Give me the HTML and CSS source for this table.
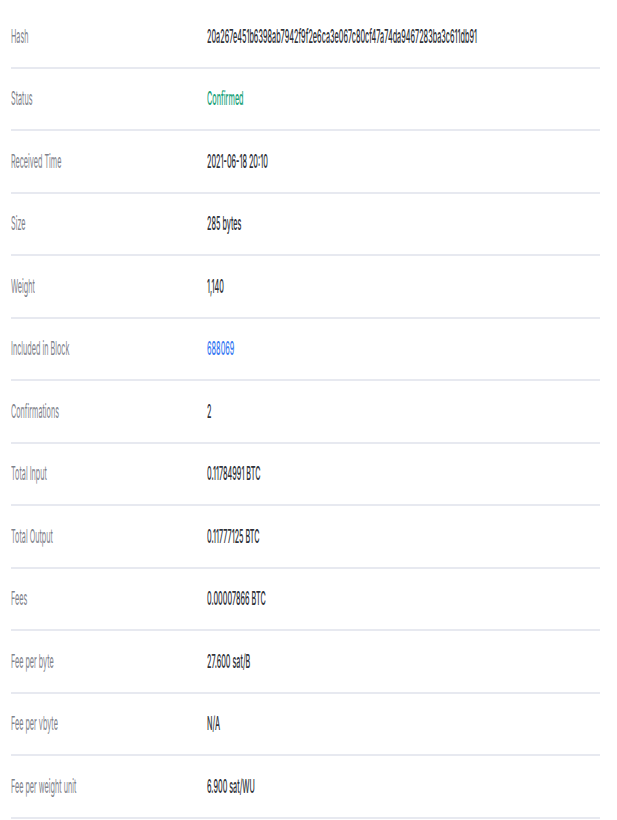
FILE: index.html
```html
<!DOCTYPE html>
<html>
<head>
<meta charset="utf-8">
<link rel="stylesheet" href="styles.css">
</head>
<body>
<div class="details">
  <div class="row"><div class="label"><span class="t">Hash</span></div><div class="value"><span class="t">20a267e451b6398ab7942f9f2e6ca3e067c80cf47a74da9467283ba3c611db91</span></div></div>
  <div class="row"><div class="label"><span class="t">Status</span></div><div class="value"><span class="t ok">Confirmed</span></div></div>
  <div class="row"><div class="label"><span class="t">Received Time</span></div><div class="value"><span class="t">2021-06-18 20:10</span></div></div>
  <div class="row"><div class="label"><span class="t">Size</span></div><div class="value"><span class="t">285 bytes</span></div></div>
  <div class="row"><div class="label"><span class="t">Weight</span></div><div class="value"><span class="t">1,140</span></div></div>
  <div class="row"><div class="label"><span class="t">Included in Block</span></div><div class="value"><span class="t link">688069</span></div></div>
  <div class="row"><div class="label"><span class="t">Confirmations</span></div><div class="value"><span class="t">2</span></div></div>
  <div class="row"><div class="label"><span class="t">Total Input</span></div><div class="value"><span class="t">0.11784991 BTC</span></div></div>
  <div class="row"><div class="label"><span class="t">Total Output</span></div><div class="value"><span class="t">0.11777125 BTC</span></div></div>
  <div class="row"><div class="label"><span class="t">Fees</span></div><div class="value"><span class="t">0.00007866 BTC</span></div></div>
  <div class="row"><div class="label"><span class="t">Fee per byte</span></div><div class="value"><span class="t">27.600 sat/B</span></div></div>
  <div class="row"><div class="label"><span class="t">Fee per vbyte</span></div><div class="value"><span class="t">N/A</span></div></div>
  <div class="row"><div class="label"><span class="t">Fee per weight unit</span></div><div class="value"><span class="t">6.900 sat/WU</span></div></div>
</div>
</body>
</html>
```
FILE: styles.css
```css
html, body {
  margin: 0;
  padding: 0;
  background: #ffffff;
}
body {
  font-family: Inter, "Noto Sans", sans-serif;
  font-size: 19px;
}
.details {
  padding: 6px 17px 0 11px;
}
.row {
  display: flex;
  align-items: center;
  height: 62.5px;
  box-sizing: border-box;
  border-bottom: 2px solid #e7e9f0;
}
.label {
  width: 196px;
  flex: none;
  color: #7f838c;
  overflow: hidden;
}
.value {
  flex: 1;
  min-width: 0;
  overflow: hidden;
  color: #30333a;
  font-weight: 500;
}
.t {
  display: inline-block;
  transform: scaleX(0.38);
  transform-origin: left center;
  white-space: nowrap;
}
.ok {
  color: #1aa37a;
}
.link {
  color: #3b7cf3;
}
```
